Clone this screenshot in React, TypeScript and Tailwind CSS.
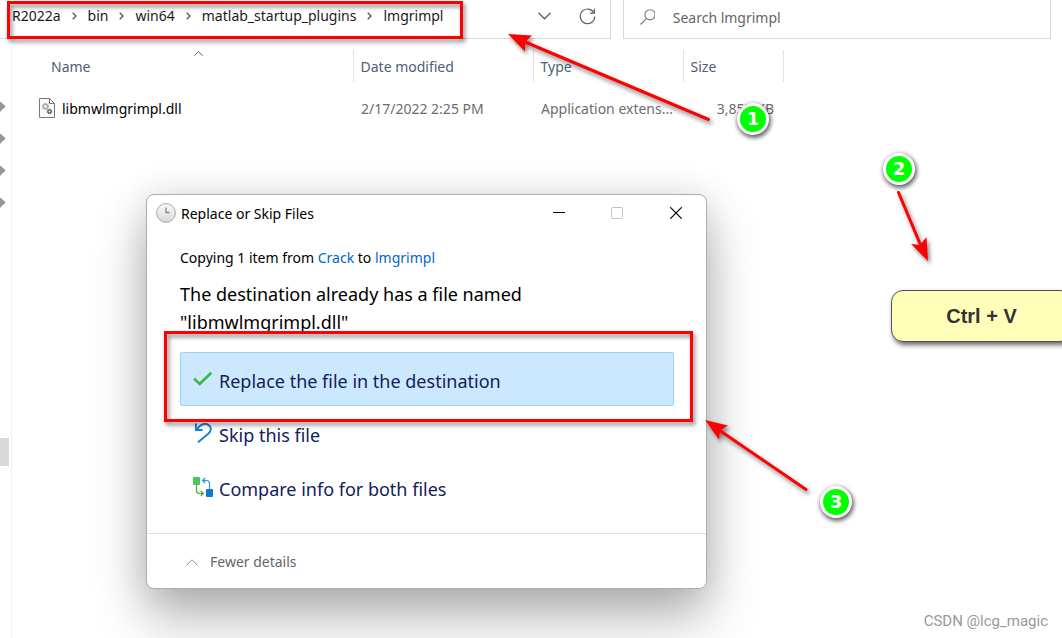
import { useState } from 'react';
import type { ReactNode } from 'react';

const crumbs = ['R2022a', 'bin', 'win64', 'matlab_startup_plugins', 'lmgrimpl'];

const files = [
  { name: 'libmwlmgrimpl.dll', modified: '2/17/2022 2:25 PM', type: 'Application extens...', size: '3,853 KB' },
];

function PinIcon() {
  return (
    <svg width="6" height="12" viewBox="0 0 6 12" className="block">
      <path d="M0 0.5L1.5 1.5L5.2 5V6.6L3 7.8L0 11Z" fill="#8d989f" />
    </svg>
  );
}

function DllIcon() {
  return (
    <svg width="16" height="20" viewBox="0 0 16 20" fill="none" className="shrink-0">
      <path d="M0.5 0.5H10.5L15.5 5.5V19.5H0.5Z" fill="#fafafa" stroke="#767676" />
      <path d="M10.5 0.5V5.5H15.5" stroke="#767676" />
      <circle cx="6.5" cy="8.5" r="2.3" stroke="#9dabb5" strokeWidth="1.4" />
      <circle cx="6.5" cy="8.5" r="3.2" stroke="#9dabb5" strokeDasharray="1.2 1.3" />
      <circle cx="10.5" cy="13.5" r="1.6" stroke="#4c5a64" strokeWidth="1.3" />
      <circle cx="10.5" cy="13.5" r="2.4" stroke="#4c5a64" strokeDasharray="0.9 1" />
    </svg>
  );
}

function ClockIcon() {
  return (
    <svg width="20" height="20" viewBox="0 0 20 20" fill="none">
      <defs>
        <linearGradient id="clockFace" x1="0" y1="0" x2="0" y2="1">
          <stop offset="0" stopColor="#fbfbfb" />
          <stop offset="1" stopColor="#d8d8d8" />
        </linearGradient>
      </defs>
      <circle cx="10" cy="10" r="9.4" fill="url(#clockFace)" stroke="#a6a6a6" />
      <path d="M10 4.5V9.5H13.5" stroke="#8c8c8c" strokeWidth="1.4" />
    </svg>
  );
}

function CheckIcon() {
  return (
    <svg width="20" height="20" viewBox="0 0 20 20" fill="none">
      <path d="M1 9.5L6.7 14.9L18.3 3.7" stroke="#3db83a" strokeWidth="2.6" />
    </svg>
  );
}

function SkipIcon() {
  return (
    <svg width="20" height="20" viewBox="0 0 20 20" fill="none" stroke="#1580d4" strokeWidth="1.9">
      <path d="M5 19.3L15.3 10.7C17.3 9 18.1 6.7 17.6 4.8C16.8 1.6 13 0 9.6 1.3C7.4 2.1 5.5 4 3.4 6.6" />
      <path d="M2.9 0.5V7H9.6" />
    </svg>
  );
}

function CompareIcon() {
  return (
    <svg width="20" height="20" viewBox="0 0 20 20" fill="none">
      <rect width="7" height="8" rx="1" fill="#46c95a" />
      <rect x="13" y="12" width="7" height="8" rx="1" fill="#0f78d0" />
      <path d="M3.5 8V13.5C3.5 15.5 4.8 16.5 6.5 16.5H10M7.8 14L10.4 16.5L7.8 19" stroke="#43aa2d" strokeWidth="1.2" />
      <path d="M16.5 12V6.5C16.5 4.5 15.3 3.5 13.5 3.5H10M12.2 1L9.6 3.5L12.2 6" stroke="#2a92dc" strokeWidth="1.2" />
    </svg>
  );
}

function Option({ icon, label, selected, onClick }: {
  icon: ReactNode;
  label: string;
  selected: boolean;
  onClick: () => void;
}) {
  return (
    <button
      onClick={onClick}
      className={`flex h-[54px] w-full items-center gap-1.5 rounded-xs border px-3 text-left text-lg text-[#14205a] ${
        selected ? 'border-[#99d1ff] bg-[#cce8ff]' : 'border-transparent'
      }`}
    >
      {icon}
      <span className="pt-1">{label}</span>
    </button>
  );
}

function ReplaceDialog() {
  const [choice, setChoice] = useState(0);

  return (
    <section
      role="dialog"
      aria-labelledby="dialog-title"
      className="absolute left-[146px] top-[194px] w-[561px] rounded-lg border border-[#adadad] bg-white text-black shadow-[0_28px_52px_rgba(0,0,0,0.3),0_0_36px_rgba(0,0,0,0.1)]"
    >
      <header className="flex h-9 items-center pl-[9px]">
        <ClockIcon />
        <h1 id="dialog-title" className="grow pt-0.5 pl-[5px] text-sm">Replace or Skip Files</h1>
        <button aria-label="Minimize" className="flex h-full w-[58px] items-center justify-center">
          <svg width="12" height="12" stroke="#000"><path d="M0 5.5H12" /></svg>
        </button>
        <button aria-label="Maximize" disabled className="flex h-full w-[58px] items-center justify-center">
          <svg width="12" height="12" fill="none" stroke="#c4c4c4"><rect x="0.5" y="0.5" width="11" height="11" rx="1" /></svg>
        </button>
        <button aria-label="Close" className="flex h-full w-[60px] items-center justify-center">
          <svg width="12" height="12" stroke="#000" strokeWidth="1.2"><path d="M0.3 0.3L11.7 11.7M11.7 0.3L0.3 11.7" /></svg>
        </button>
      </header>

      <div className="border-b border-[#dfdfdf] pt-[17px] pr-8 pb-[19px] pl-[33px]">
        <p className="text-sm leading-5">
          Copying 1 item from <a href="#crack" className="text-[#0066cc]">Crack</a> to{' '}
          <a href="#lmgrimpl" className="text-[#0066cc]">lmgrimpl</a>
        </p>
        <p className="mt-3 text-lg leading-7">
          The destination already has a file named
          <br />
          "libmwlmgrimpl.dll"
        </p>
        <div className="mt-4">
          <Option icon={<CheckIcon />} label="Replace the file in the destination" selected={choice === 0} onClick={() => setChoice(0)} />
          <Option icon={<SkipIcon />} label="Skip this file" selected={choice === 1} onClick={() => setChoice(1)} />
          <Option icon={<CompareIcon />} label="Compare info for both files" selected={choice === 2} onClick={() => setChoice(2)} />
        </div>
      </div>

      <footer className="flex h-[54px] items-center pt-0.5 pl-[39px]">
        <button className="flex items-center gap-3 text-sm text-[#666]">
          <svg width="12" height="7" fill="none" stroke="#8a8a8a"><path d="M0.3 6.5L6 0.8L11.7 6.5" /></svg>
          Fewer details
        </button>
      </footer>
    </section>
  );
}

// Numbered green step marker
function Step({ n, className }: { n: number; className: string }) {
  return (
    <span
      className={`absolute flex size-8 items-center justify-center rounded-full border-3 border-white bg-[#00ff00] font-['DejaVu_Sans',sans-serif] text-lg font-bold text-white shadow-[1px_2px_4px_1px_rgba(0,0,0,0.6)] ${className}`}
    >
      {n}
    </span>
  );
}

function Arrow({ line, head, width, height, className }: {
  line: string;
  head: string;
  width: number;
  height: number;
  className: string;
}) {
  return (
    <svg
      width={width}
      height={height}
      className={`pointer-events-none absolute overflow-visible drop-shadow-[2px_3px_2px_rgba(0,0,0,0.5)] ${className}`}
    >
      <path d={line} stroke="#f00" strokeWidth="3" strokeLinecap="round" />
      <path d={head} fill="#f00" />
    </svg>
  );
}

export default function App() {
  return (
    <div className="relative flex min-h-screen flex-col overflow-hidden bg-white font-['Noto_Sans','Open_Sans',sans-serif] text-sm">
      {/* Address bar and search */}
      <div className="flex h-[39px] gap-3 pr-[11px]">
        <div className="flex w-[611px] items-center border-r border-b border-[#d9d9d9] pr-3.5 pb-1.5 pl-3">
          <nav className="flex grow items-center gap-[11px] text-[#1b1b1b]">
            {crumbs.map((crumb, i) => (
              <span key={crumb} className="flex items-center gap-[11px]">
                {i > 0 && (
                  <svg width="5" height="8" fill="none" stroke="#555" strokeWidth="1.3"><path d="M0.7 0.7L4 4L0.7 7.3" /></svg>
                )}
                <a href={`#${crumb}`}>{crumb}</a>
              </span>
            ))}
          </nav>
          <button aria-label="Recent locations" className="mr-7">
            <svg width="13" height="8" fill="none" stroke="#606060" strokeWidth="1.3"><path d="M0.5 0.8L6.5 6.8L12.5 0.8" /></svg>
          </button>
          <button aria-label="Refresh">
            <svg width="17" height="17" viewBox="0 0 17 17" fill="none" stroke="#606060" strokeWidth="1.2">
              <path d="M15 5A7.3 7.3 0 1 0 15.8 8.5" />
              <path d="M15.4 0.8V5.2H11" />
            </svg>
          </button>
        </div>
        <label className="flex grow items-center gap-[18px] border-x border-b border-[#d9d9d9] pb-[5px] pl-4">
          <svg width="16" height="16" fill="none" stroke="#777" strokeWidth="1.1" aria-label="Search">
            <circle cx="10" cy="5.8" r="5.1" />
            <path d="M6.3 9.6L0.5 15.5" />
          </svg>
          <input type="text" placeholder="Search lmgrimpl" className="w-full grow pt-0.5 outline-none placeholder:text-[#666]" />
        </label>
      </div>

      <div className="flex grow pt-[11px]">
        {/* Edge of the navigation pane */}
        <aside className="flex w-3 flex-col border-r border-[#f0f0f0] pt-[51px]">
          <div className="flex flex-col gap-5">
            <PinIcon />
            <PinIcon />
            <PinIcon />
            <PinIcon />
          </div>
          <div className="mt-[229px] h-7 w-[9px] bg-[#d9d9d9]" />
        </aside>

        <main>
          <table className="w-[771px] table-fixed border-collapse text-left">
            <colgroup>
              <col className="w-[341px]" />
              <col className="w-[180px]" />
              <col className="w-[150px]" />
              <col className="w-[100px]" />
            </colgroup>
            <thead>
              <tr className="h-8 text-[#4c607a]">
                <th className="relative border-r border-[#e2e2e2] pt-0.5 pl-[39px] font-normal">
                  Name
                  <svg width="9" height="5" fill="none" stroke="#666" className="absolute top-px left-[182px]"><path d="M0.3 4.7L4.5 0.7L8.7 4.7" /></svg>
                </th>
                <th className="border-r border-[#e2e2e2] pt-0.5 pl-[7px] font-normal">Date modified</th>
                <th className="border-r border-[#e2e2e2] pt-0.5 pl-[7px] font-normal">Type</th>
                <th className="border-r border-[#e2e2e2] pt-0.5 pl-[7px] font-normal">Size</th>
              </tr>
            </thead>
            <tbody>
              {files.map((file) => (
                <tr key={file.name} className="h-[52px] text-[#6d6d6d]">
                  <td className="pl-[27px]">
                    <span className="flex items-center gap-[7px] text-black">
                      <DllIcon />
                      <span className="pt-0.5">{file.name}</span>
                    </span>
                  </td>
                  <td className="pt-0.5 pl-2">{file.modified}</td>
                  <td className="pt-0.5 pl-2 whitespace-nowrap">{file.type}</td>
                  <td className="pt-0.5 pr-[9px] text-right">{file.size}</td>
                </tr>
              ))}
            </tbody>
          </table>
        </main>
      </div>

      <ReplaceDialog />

      {/* Step 1: open the folder */}
      <div className="pointer-events-none absolute top-px left-[7px] h-[38px] w-[456px] border-3 border-[#f00] drop-shadow-[2px_3px_2px_rgba(0,0,0,0.5)]" />
      <Arrow className="top-[34px] left-[508px]" width={202} height={88} line="M200.5 85.5L16 7.5" head="M0 0L24 1.5L17 8L17 17.5Z" />
      <Step n={1} className="top-[103px] left-[737px]" />

      {/* Step 2: paste */}
      <Step n={2} className="top-[153px] left-[883px]" />
      <Arrow className="top-[192px] left-[898px]" width={32} height={70} line="M0.5 0.5L23 54" head="M30 69L13 52L22 53L28.5 45Z" />
      <kbd className="absolute top-[290px] left-[891px] flex h-[52px] w-[181px] items-center justify-center rounded-xl border border-[#505050] bg-[#ffffb9] font-['Liberation_Sans',sans-serif] text-xl font-bold text-[#333] shadow-[2px_3px_5px_rgba(0,0,0,0.6)]">
        Ctrl + V
      </kbd>

      {/* Step 3: replace the file */}
      <div className="pointer-events-none absolute top-[331px] left-[164px] h-[91px] w-[529px] border-3 border-[#f00] drop-shadow-[2px_3px_2px_rgba(0,0,0,0.5)]" />
      <Arrow className="top-[420px] left-[705px]" width={102} height={72} line="M101 69.5L14 10" head="M0 0L23 5.5L15 10.5L14 19.5Z" />
      <Step n={3} className="top-[486px] left-[820px]" />

      <p className="absolute right-[14px] bottom-[7px] font-[Roboto,sans-serif] text-[15px] leading-5 text-[#999]">CSDN @lcg_magic</p>
    </div>
  );
}
